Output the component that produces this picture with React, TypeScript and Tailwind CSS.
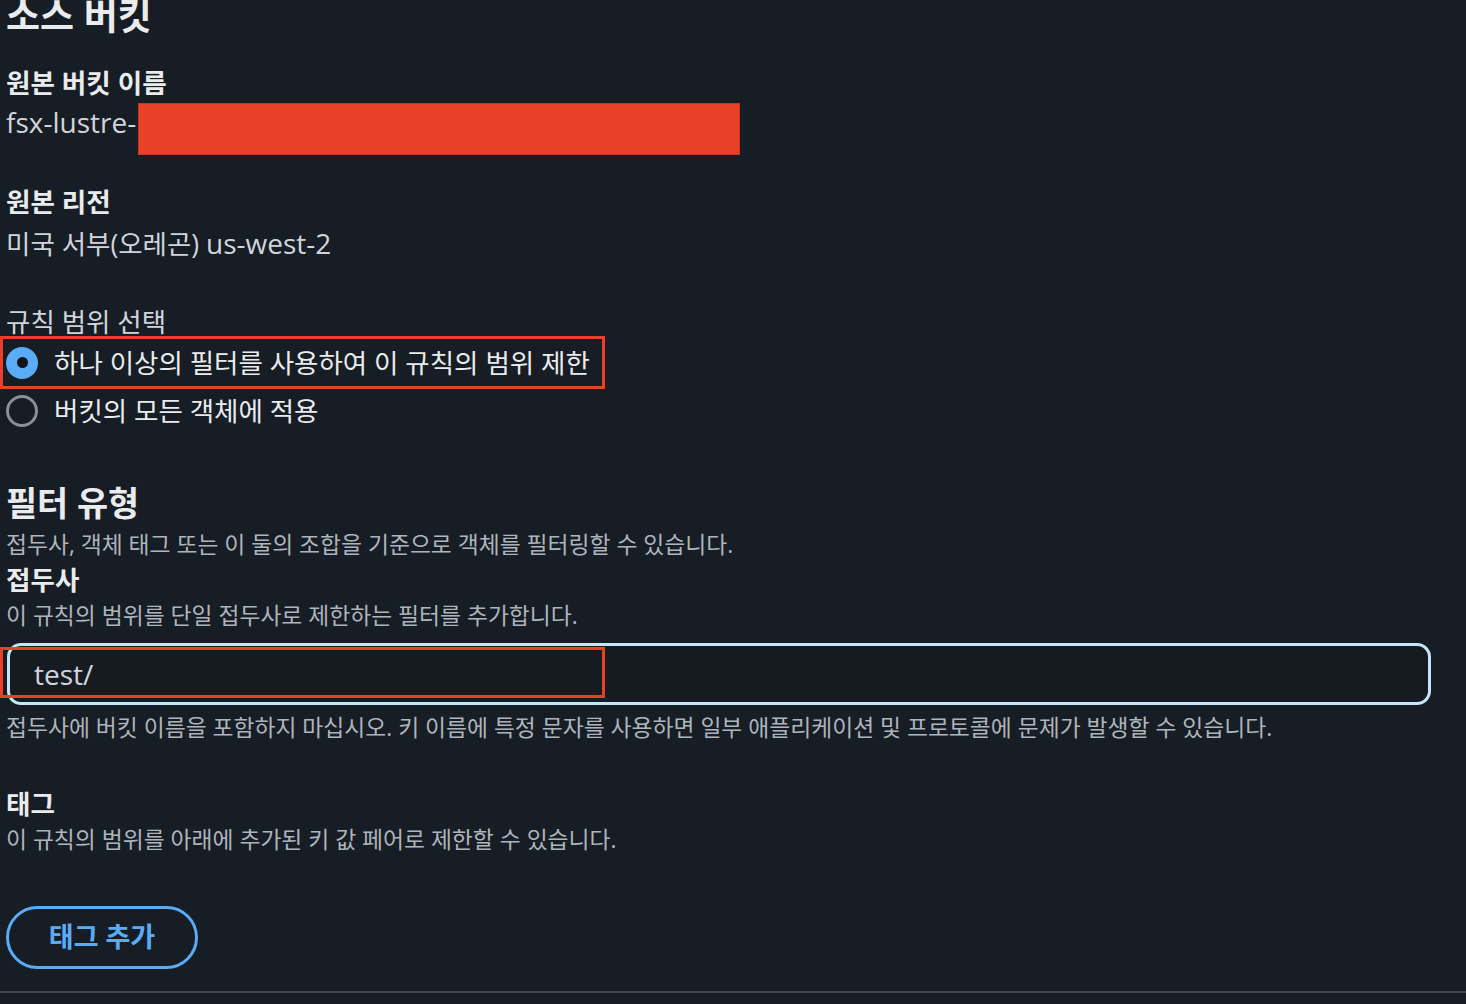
import React from "react";

const latin = "text-[28px] font-['Open_Sans','Noto_Sans_CJK_KR',sans-serif]";

export default function App() {
  return (
    <div className="h-[1004px] w-full overflow-hidden bg-[#171d25] font-['Open_Sans','Noto_Sans_CJK_KR',sans-serif] text-[#d1d5db]">
      <div className="flex flex-col">
        {/* Section title */}
        <h2 className="-mt-[4px] ml-[6px] text-[37px] leading-[40px] font-bold text-[#e9ebed]">소스 버킷</h2>

        {/* Source bucket name */}
        <div className="mt-[30.5px] ml-[6px] text-[26.6px] leading-[32px] font-bold text-[#e9ebed]">원본 버킷 이름</div>
        <div className="mt-[4.5px] flex h-[52px] items-start">
          <span className={`ml-[6px] mt-[3px] leading-[32px] text-[#d1d5db] ${latin}`}>fsx-lustre-</span>
          <div className="ml-[2px] h-[52px] w-[602px] border border-[#c93522] bg-[#e9402a]" />
        </div>

        {/* Source region */}
        <div className="mt-[30.5px] ml-[6px] text-[26.6px] leading-[32px] font-bold text-[#e9ebed]">원본 리전</div>
        <div className="mt-[9px] ml-[6px] text-[26.5px] leading-[32px] text-[#d1d5db]">
          미국 서부(오레곤) <span className={latin}>us-west-2</span>
        </div>

        {/* Rule scope */}
        <div className="mt-[48.5px] ml-[6px] text-[26.5px] leading-[29px] text-[#d1d5db]">규칙 범위 선택</div>
        <div className="relative -mt-[1px] flex flex-col">
          <div className="flex h-[53px] items-center">
            <span className="ml-[6px] flex h-[32px] w-[32px] items-center justify-center rounded-full bg-[#5aacf6]">
              <span className="h-[11px] w-[11px] rounded-full bg-[#0f141a]" />
            </span>
            <span className="ml-[16px] text-[26.5px] leading-[32px] text-[#e9ebed]">하나 이상의 필터를 사용하여 이 규칙의 범위 제한</span>
          </div>
          <div className="flex h-[44px] items-center">
            <span className="ml-[6px] h-[32px] w-[32px] rounded-full border-[3px] border-[#8c8f94]" />
            <span className="ml-[16px] text-[26.5px] leading-[32px] text-[#e9ebed]">버킷의 모든 객체에 적용</span>
          </div>
          <div className="pointer-events-none absolute left-0 top-0 h-[53px] w-[605px] border-[3px] border-[#e8402a]" />
        </div>

        {/* Filter type */}
        <h3 className="mt-[50.3px] ml-[6px] text-[33.8px] leading-[40px] font-bold text-[#e9ebed]">필터 유형</h3>
        <p className="mt-[8.2px] ml-[6px] text-[22.8px] leading-[28px] text-[#aeb4bc]">
          접두사, 객체 태그 또는 이 둘의 조합을 기준으로 객체를 필터링할 수 있습니다.
        </p>

        <div className="mt-[5px] ml-[6px] text-[26.6px] leading-[32px] font-bold text-[#e9ebed]">접두사</div>
        <p className="mt-[6px] ml-[6px] text-[22.8px] leading-[28px] text-[#aeb4bc]">
          이 규칙의 범위를 단일 접두사로 제한하는 필터를 추가합니다.
        </p>

        <div className="relative mt-[12.5px] ml-[7px] w-[1424px]">
          <div className="flex h-[62px] items-center rounded-[14px] border-[3px] border-[#c5e5fc] bg-[#161b22] pl-[24px]">
            <span className={`leading-[32px] text-[#d1d5db] ${latin}`}>test/</span>
          </div>
          <div className="pointer-events-none absolute -left-[7px] top-[4px] h-[51px] w-[605px] border-[3px] border-[#e8402a]" />
        </div>
        <p className="mt-[9.5px] ml-[6px] text-[22.8px] leading-[28px] text-[#aeb4bc]">
          접두사에 버킷 이름을 포함하지 마십시오. 키 이름에 특정 문자를 사용하면 일부 애플리케이션 및 프로토콜에 문제가 발생할 수 있습니다.
        </p>

        {/* Tags */}
        <div className="mt-[46px] ml-[6px] text-[26.6px] leading-[32px] font-bold text-[#e9ebed]">태그</div>
        <p className="mt-[6px] ml-[6px] text-[22.8px] leading-[28px] text-[#aeb4bc]">
          이 규칙의 범위를 아래에 추가된 키 값 페어로 제한할 수 있습니다.
        </p>

        <div className="mt-[51.5px] ml-[6px]">
          <button className="flex h-[63px] w-[192px] items-center justify-center rounded-full border-[3px] border-[#5aacf6] text-[27px] font-bold text-[#5aacf6]">
            태그 추가
          </button>
        </div>

        <div className="mt-[22px] h-[2px] w-full bg-[#424650]" />
      </div>
    </div>
  );
}
